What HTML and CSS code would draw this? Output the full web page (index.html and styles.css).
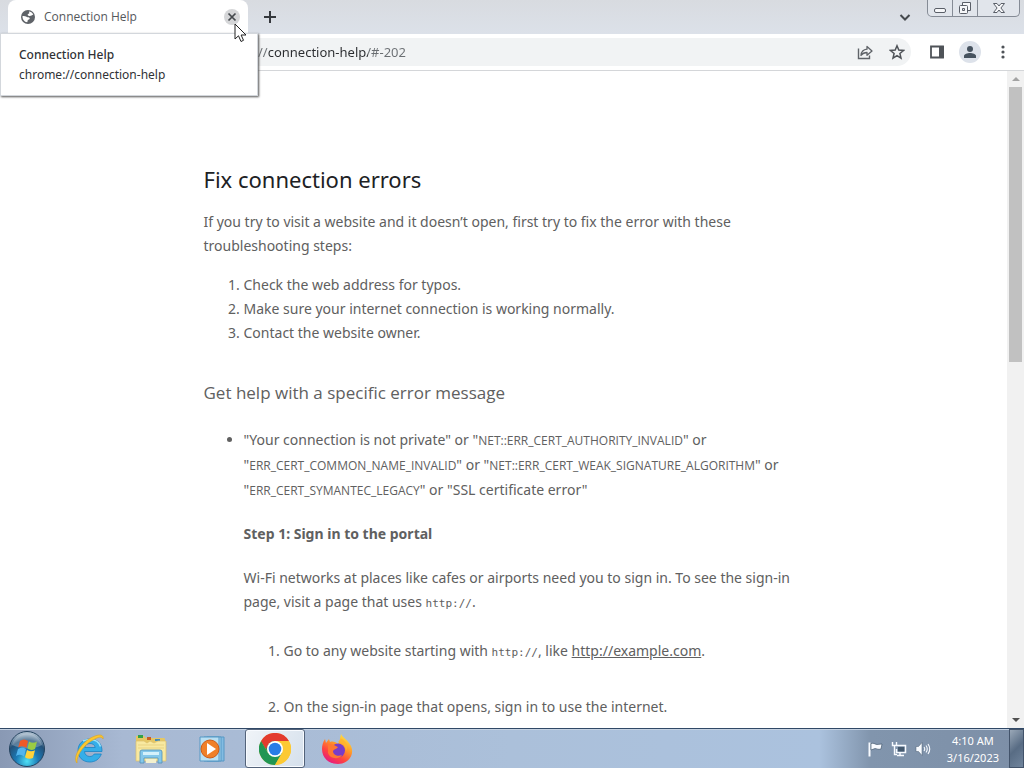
FILE: index.html
```html
<!DOCTYPE html>
<html lang="en">
<head>
<meta charset="utf-8">
<title>Connection Help</title>
<link rel="stylesheet" href="styles.css">
</head>
<body>
<header class="tabstrip">
  <div class="tab">
    <svg class="globe" viewBox="0 0 16 16"><circle cx="8" cy="8" r="7" fill="#5f6368"/><path d="M9 2.500c1.500.2 3.300 1 4.300 3-1.500.5-2.300 1.700-4 1.400-1-.2-1.800-.3-1.600-1.300.2-.800 1.500-.8 1.600-1.600 0-.6-.5-.8-.3-1.500z" fill="#fff"/><path d="M2.500 7c1.500-.2 3 0 4 .8 1 .8 2.800.2 3.200 1.500.3 1-.8 1.300-1.600 1.600-.8.300-.2 1.400-1 2.400C4.500 13 2.300 10.500 2.500 7z" fill="#fff"/></svg>
    <span class="tab-title">Connection Help</span>
    <button class="tab-close" aria-label="Close tab"><svg viewBox="0 0 16 16"><path d="M4 4l8 8M12 4l-8 8" stroke="#45494d" stroke-width="2"/></svg></button>
  </div>
  <button class="new-tab" aria-label="New tab"><svg viewBox="0 0 16 16"><path d="M8 2v12M2 8h12" stroke="#35383d" stroke-width="2"/></svg></button>
  <button class="tab-search" aria-label="Search tabs"><svg viewBox="0 0 16 16"><path d="M3.500 6l4.500 4.500L12.500 6" fill="none" stroke="#45494d" stroke-width="2"/></svg></button>
  <div class="window-controls">
    <button aria-label="Minimize"><svg viewBox="0 0 20 16"><rect x="4.500" y="8.500" width="11" height="4" rx="1.500" fill="#f6f7f9" stroke="#5a5f68"/></svg></button>
    <button aria-label="Restore"><svg viewBox="0 0 20 16"><path d="M7.500 2.500h8v8h-8z" fill="#f6f7f9" stroke="#5a5f68"/><rect x="4.500" y="5.500" width="8" height="8" rx="1" fill="#f6f7f9" stroke="#5a5f68"/><path d="M7.500 8.500h2v2h-2z" fill="#dfe3ea" stroke="#5a5f68"/></svg></button>
    <button class="window-close" aria-label="Close"><svg viewBox="0 0 20 16"><path d="M4.500 3.500h3.500l2 2.500 2-2.500h3.500l-3.600 4.500 3.600 4.500H12l-2-2.500-2 2.500H4.500L8.100 8z" fill="#f6f7f9" stroke="#5a5f68"/></svg></button>
  </div>
</header>
<div class="toolbar">
  <div class="omnibox">
    <input class="address" type="text" aria-label="Address" value="//connection-help/#-202">
    <button aria-label="Share"><svg viewBox="0 0 16 16"><path d="M1.500 4.500v10h11v-3" fill="none" stroke="#5f6368" stroke-width="1.400"/><path d="M4 11.500c.3-4 2.500-6 6-6.300V2.500l5 4.500-5 4.300V8.500c-2.800 0-4.500.8-6 3z" fill="none" stroke="#5f6368" stroke-width="1.300" stroke-linejoin="round"/></svg></button>
    <button aria-label="Bookmark this tab"><svg viewBox="0 0 16 16"><path d="M8 1.800l1.800 4.300 4.700.4-3.600 3 1.100 4.700L8 11.700l-4 2.500 1.100-4.700-3.600-3 4.700-.4z" fill="none" stroke="#4f5358" stroke-width="1.500"/></svg></button>
  </div>
  <button aria-label="Side panel"><svg viewBox="0 0 16 16"><path d="M2 2.500h12v11H2z" fill="none" stroke="#4f5358" stroke-width="1.800"/><path d="M10 2h5v12h-5z" fill="#4f5358"/></svg></button>
  <button class="profile" aria-label="Profile"><svg viewBox="0 0 16 16"><circle cx="8" cy="5" r="3" fill="#47535f"/><path d="M2 14v-2c0-2 3.500-3 6-3s6 1 6 3v2z" fill="#47535f"/></svg></button>
  <button aria-label="Menu"><svg viewBox="0 0 16 16"><g fill="#4f5358"><circle cx="8" cy="3" r="1.600"/><circle cx="8" cy="8" r="1.600"/><circle cx="8" cy="13" r="1.600"/></g></svg></button>
</div>
<div class="viewport">
  <main class="page">
    <article class="help">
      <h1>Fix connection errors</h1>
      <p>If you try to visit a website and it doesn’t open, first try to fix the error with these<br>troubleshooting steps:</p>
      <ol class="steps">
        <li>Check the web address for typos.</li>
        <li>Make sure your internet connection is working normally.</li>
        <li>Contact the website owner.</li>
      </ol>
      <h2>Get help with a specific error message</h2>
      <ul class="errors">
        <li>
          <div class="names">"Your connection is not private" or "<span class="error">NET::ERR_CERT_AUTHORITY_INVALID</span>" or<br>"<span class="error">ERR_CERT_COMMON_NAME_INVALID</span>" or "<span class="error">NET::ERR_CERT_WEAK_SIGNATURE_ALGORITHM</span>" or<br>"<span class="error">ERR_CERT_SYMANTEC_LEGACY</span>" or "SSL certificate error"</div>
          <h3>Step 1: Sign in to the portal</h3>
          <p>Wi-Fi networks at places like cafes or airports need you to sign in. To see the sign-in<br>page, visit a page that uses <code>http://</code>.</p>
          <ol class="portal">
            <li>Go to any website starting with <code>http://</code>, like <a href="http://example.com">http://example.com</a>.</li>
            <li>On the sign-in page that opens, sign in to use the internet.</li>
          </ol>
        </li>
      </ul>
    </article>
  </main>
  <div class="scrollbar">
    <svg viewBox="0 0 16 16"><path d="M4 10l4-4 4 4z" fill="#a3a3a3"/></svg>
    <div class="track"><div class="thumb"></div></div>
    <svg viewBox="0 0 16 16"><path d="M4 6l4 4 4-4z" fill="#505050"/></svg>
  </div>
</div>
<footer class="taskbar">
  <button class="start" aria-label="Start"><svg viewBox="0 0 38 38">
    <defs><radialGradient id="orb" cx=".5" cy=".85" r=".8"><stop offset="0" stop-color="#4fe0f5"/><stop offset=".4" stop-color="#1b79b5"/><stop offset=".75" stop-color="#245178"/><stop offset="1" stop-color="#a9bccd"/></radialGradient></defs>
    <circle cx="19" cy="19" r="17.500" fill="url(#orb)" stroke="#24435f"/>
    <path d="M4 15a15.500 15.500 0 0 1 30 0c-9 5-20 4-30 0z" fill="#fff" opacity=".25"/>
    <path d="M12 11q4-3 8 0l-1.500 7q-4-3-8.300-.5z" fill="#ee5a28"/><path d="M21 11.500q4 2.500 8 0L27 19q-4 2-7.500-.5z" fill="#9bcb43"/><path d="M10 19q4-2.500 8 0l-2 7.500q-3.500-3-8-.5z" fill="#52b5ee"/><path d="M19 20q4 2.500 8 .3L25 28q-4 2-8-.8z" fill="#ffd23a"/>
  </svg></button>
  <button class="app" aria-label="Internet Explorer"><svg viewBox="0 0 32 32">
    <path d="M29 18.500H11.500c.2 3.200 2.500 5 5.300 5 2 0 3.500-.9 4.500-2.500h7c-1.700 5-6 8-11.500 8C9.500 29 5 24 5 17.500S9.800 6 17 6c7.800 0 12.300 5.200 12 12.500zM11.700 14.500h10.500c-.4-2.500-2.300-4-5.200-4s-4.900 1.500-5.300 4z" fill="#35aee8" stroke="#1b83c4" stroke-width=".8"/>
    <path d="M10 8c2-1 5-1.500 7-1.500 5 0 9 2.500 10.500 7" fill="none" stroke="#9be3fb" stroke-width="1.500"/>
    <path d="M4 30C-1 25 8 8 22 3c5-2 9-1 8 3-.800-2-3-2.600-7-.6C12 10 3 22 4 30z" fill="#fcc72f" stroke="#dda31d" stroke-width=".6"/>
  </svg></button>
  <button class="app" aria-label="Windows Explorer"><svg viewBox="0 0 32 32">
    <path d="M1 3h8l2 2h18a1 1 0 0 1 1 1v22H1z" fill="#e5c765"/><path d="M3 2h5v3H3z" fill="#33a148"/><path d="M12 4h4v3h-4z" fill="#c95f25"/><path d="M20 6h5v2h-5z" fill="#468cb9"/>
    <path d="M1 8h8l3 2 3-2 4 2 4-2h8v20H1z" fill="#f8e9a1" stroke="#ddc06b" stroke-width=".7"/><path d="M3 12h26M3 15h26" stroke="#e9d382"/>
    <path d="M5 30V19q0-2 2-2h18q2 0 2 2v11h-4v-5H9v5z" fill="#85c8ea" stroke="#508fb8" stroke-width=".8"/><path d="M8 19h16v3H8z" fill="#d5f1fb"/><path d="M11 26h10v4H11z" fill="#f3f0ce"/>
  </svg></button>
  <button class="app" aria-label="Media Player"><svg viewBox="0 0 32 32">
    <path d="M10 4h17v24H10z" fill="#83bce2" stroke="#5798c5"/><path d="M7 4h17v24H7z" fill="#a4d4ee" stroke="#5798c5"/><path d="M3 4h19v24H3z" fill="#b9e0f3" stroke="#5798c5"/>
    <circle cx="13" cy="16" r="9" fill="#f08029" stroke="#ce5b17"/><path d="M10 10l9 6-9 6z" fill="#fff"/>
  </svg></button>
  <button class="app active" aria-label="Chrome"><svg viewBox="0 0 32 32">
    <circle cx="16" cy="16" r="16" fill="#fcc934"/><path d="M2.100 8a16 16 0 0 0 13.900 24l7-12-14 0z" fill="#219653"/><path d="M16 8h13.900A16 16 0 0 1 16 32l7-12z" fill="#fcc934"/><path d="M2.100 8L9.100 20 16 8z" fill="#219653"/><path d="M2.100 8a16 16 0 0 1 27.800 0H16a8 8 0 0 0-7.500 5.500L7 16z" fill="#e33b2e"/>
    <circle cx="16" cy="16" r="8" fill="#fff"/><circle cx="16" cy="16" r="6.300" fill="#287de6"/>
  </svg></button>
  <button class="app" aria-label="Firefox"><svg viewBox="0 0 32 32">
    <defs><linearGradient id="fox" x1=".85" y1="0" x2=".25" y2="1"><stop offset="0" stop-color="#fff04a"/><stop offset=".4" stop-color="#ff9a28"/><stop offset=".7" stop-color="#ff453f"/><stop offset="1" stop-color="#e31587"/></linearGradient></defs>
    <path d="M20 1c2 4 7 6 10 12 4 9-3 18-13 18C8 31 1 25 1 16c0-4 1-7 3-10l1 4 3-4 1 3c3-1 6 0 8 2 2-3 2-6 3-10z" fill="url(#fox)"/>
    <circle cx="17" cy="17.500" r="7" fill="#793cc8"/><path d="M7 12c4-2 7 1 10 2-1 2-4 2-5 4 0 4 5 6 9 4-3 5-12 4-14-2z" fill="#ff7731"/><path d="M17 9c5 0 8 4 8 9 3-6-1-11-5-12z" fill="#ffb52e"/>
  </svg></button>
  <div class="tray">
    <svg viewBox="0 0 16 16"><path d="M2.500 1.500v14" stroke="#f8fbff" stroke-width="2"/><path d="M4 2.500c3-1 4 1 6 1l5-.5-1 5c-3 1-4-.5-6-.5L4 9z" fill="#f8fbff" stroke="#34495f" stroke-width=".6"/></svg>
    <svg viewBox="0 0 16 16"><path d="M6 4.500h8.500v7H5.500V8M9 12v2.500M6 14.500h7" fill="none" stroke="#f8fbff" stroke-width="1.500"/><path d="M1.500 1v3.500h4V1M3.500 4v9.500H6" fill="none" stroke="#f8fbff" stroke-width="1.400"/><path d="M7 6h6.300v4.500H7z" fill="#44596e"/></svg>
    <svg viewBox="0 0 16 16"><path d="M1 5.500h2.500L7 1.500v13L3.500 10.500H1z" fill="#f8fbff" stroke="#4a5d70" stroke-width=".5"/><path d="M9 6q1.500 2 0 4M11 4.500q2.500 3.500 0 7M13 3q3.500 5 0 10" fill="none" stroke="#f8fbff" stroke-width="1.100"/></svg>
    <div class="clock"><span>4:10 AM</span><span>3/16/2023</span></div>
  </div>
  <button class="show-desktop" aria-label="Show desktop"></button>
</footer>
<div class="hovercard" role="tooltip"><strong>Connection Help</strong><span>chrome://connection-help</span></div>
<svg class="cursor" viewBox="0 0 14 20"><path d="M1 1v15l3.500-3.200L7 18.500l2.500-1.200-2.400-5.300H12z" fill="#fff" stroke="#222" stroke-width="1"/></svg>
</body>
</html>
```
FILE: styles.css
```css
* { box-sizing: border-box; }
body {
  margin: 0;
  height: 100vh;
  overflow: hidden;
  display: flex;
  flex-direction: column;
  position: relative;
  font-family: "Noto Sans", "Open Sans", sans-serif;
  font-size: 14px;
  line-height: 24px;
  color: #606060;
  background: #fff;
}
button {
  display: flex;
  align-items: center;
  justify-content: center;
  margin: 0;
  padding: 0;
  border: 0;
  background: none;
}
svg { display: block; width: 16px; height: 16px; flex: none; }

.tabstrip {
  flex: none;
  display: flex;
  align-items: center;
  height: 34px;
  padding-left: 8px;
  background: linear-gradient(#d8dbe0, #dce1e9);
}
.tab {
  display: flex;
  align-items: center;
  gap: 8px;
  width: 240px;
  height: 34px;
  padding: 0 8px 0 12px;
  border-radius: 8px 8px 0 0;
  background: #fff;
}
.tab-title { flex: 1; font-family: "Open Sans", sans-serif; font-size: 12px; color: #55585c; }
.tab-close { width: 16px; height: 16px; border-radius: 50%; background: #d5d6d8; }
.tab-close svg { width: 14px; height: 14px; }
.new-tab { width: 28px; height: 28px; margin-left: 8px; }
.tab-search { width: 28px; height: 28px; margin-left: auto; }
.window-controls {
  display: flex;
  align-self: flex-start;
  height: 17px;
  margin: 0 4px 0 8px;
  border: 1px solid #858b95;
  border-top: 0;
  border-radius: 0 0 5px 5px;
  background: #e1e5eb;
}
.window-controls button { width: 25px; border-right: 1px solid #858b95; }
.window-controls svg { width: 20px; }
.window-controls .window-close { width: 41px; border-right: 0; }

.toolbar {
  flex: none;
  display: flex;
  align-items: center;
  gap: 4px;
  height: 37px;
  padding: 0 7px 0 8px;
  border-bottom: 1px solid #d4d6d9;
}
.toolbar button { width: 28px; height: 28px; }
.omnibox {
  flex: 1;
  display: flex;
  align-items: center;
  gap: 4px;
  height: 28px;
  margin-right: 8px;
  padding-left: 250px;
  border-radius: 14px;
  background: #f1f3f4;
}
.address {
  flex: 1;
  min-width: 0;
  padding: 0;
  border: 0;
  outline: 0;
  font: 13px/20px "Noto Sans", "Open Sans", sans-serif;
  color: transparent;
  background: linear-gradient(to right, #6a6e72 10px, #2b2d30 10px, #2b2d30 110px, #6a6e72 110px);
  -webkit-background-clip: text;
  background-clip: text;
}
.toolbar .profile { width: 22px; height: 22px; margin: 0 4px; border-radius: 50%; background: #dde2ea; }

.viewport { flex: 1; min-height: 0; display: flex; }
.page { flex: 1; overflow: hidden; padding: 91px 24px 0; }
.help { max-width: 600px; margin: 0 auto; }
h1 { margin: 0 0 14px; font-size: 22px; line-height: 34px; font-weight: 400; color: #202124; }
h2 { margin: 36px 0 22px; font-family: "Open Sans", sans-serif; font-size: 17px; line-height: 24px; font-weight: 400; }
h3 { margin: 20px 0; font-size: 14px; line-height: 24px; font-weight: 700; }
p { margin: 0; white-space: nowrap; }
ol, ul { margin: 0; padding-left: 40px; }
.steps { margin-top: 15px; }
.names { line-height: 25px; white-space: nowrap; }
.error { font-family: "Open Sans", sans-serif; font-size: 12px; line-height: 1; }
code { font: 11px/1 "DejaVu Sans Mono", monospace; }
.portal { margin-top: 25px; }
.portal li + li { margin-top: 32px; }
.help a { color: inherit; }

.scrollbar { flex: none; width: 17px; display: flex; flex-direction: column; align-items: center; background: #f1f1f1; }
.track { flex: 1; align-self: stretch; padding: 0 2px; }
.thumb { height: 44%; background: #c1c1c1; }

.taskbar {
  flex: none;
  display: flex;
  align-items: stretch;
  height: 40px;
  border-top: 1px solid #304866;
  box-shadow: inset 0 1px #c5d2e2;
  background: linear-gradient(to right, #8999b4, #a8b9d3 12%, #abc0da 50%, #abc2de 80%, #8195ad 85%, #7d8fa7);
}
.start { width: 54px; }
.start svg { width: 38px; height: 38px; }
.app { width: 60px; margin-right: 2px; }
.app:nth-of-type(2) { margin-left: 5px; }
.app svg { width: 32px; height: 32px; }
.active { border: 1px solid #53637a; border-radius: 3px; background: linear-gradient(120deg, #f0f4f8, #d5e0ec); box-shadow: inset 0 0 0 1px #f8fbff; }
.tray { display: flex; align-items: center; gap: 8px; margin-left: auto; padding-right: 10px; color: #fff; }
.clock { display: flex; flex-direction: column; align-items: center; margin-left: 8px; font-size: 11px; line-height: 17px; }
.show-desktop { width: 15px; border: 1px solid #42536a; background: linear-gradient(135deg, #9aa8b8, #586c84 50%, #70849c); }

.hovercard {
  position: absolute;
  left: 0;
  top: 33px;
  display: flex;
  flex-direction: column;
  padding: 11px 18px 10px;
  width: 258px;
  border: 1px solid #d3d7dc;
  background: #fff;
  box-shadow: 1px 1px 2px #555;
  color: #303236;
  font-size: 12px;
  line-height: 20px;
}
.hovercard strong { font-weight: 500; }
.cursor { position: absolute; left: 234px; top: 23px; width: 14px; height: 20px; }
```
